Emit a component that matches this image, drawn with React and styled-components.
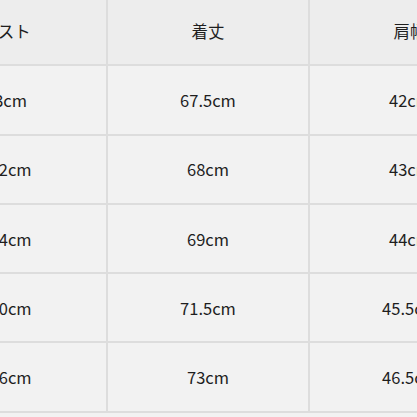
import React from "react";
import styled, { createGlobalStyle } from "styled-components";

const Global = createGlobalStyle`
  html, body { margin: 0; padding: 0; background: #f2f2f2; }
  body { font-family: "Noto Sans CJK JP", "Noto Sans", sans-serif; }
`;

const Viewport = styled.div`
  width: 417px;
  height: 417px;
  overflow: hidden;
  background: #f2f2f2;
`;

const Table = styled.table`
  border-collapse: collapse;
  table-layout: fixed;
  margin-left: -96px;
  margin-top: -5px;
  width: 808px;
  background: #f2f2f2;
`;

const Col = styled.col`
  width: 202px;
`;

const Row = styled.tr`
  height: 69.3px;
  background: ${(p) => (p.$head ? "#ededed" : "#f2f2f2")};
`;

const Cell = styled.td`
  border: 2px solid #dddddd;
  text-align: center;
  vertical-align: middle;
  padding: 0;
  font-size: 16.5px;
  color: #1e1e1e;
  font-weight: 400;
  white-space: nowrap;
`;

const head = ["バスト", "着丈", "肩幅", "袖丈"];
const rows = [
  ["93cm", "67.5cm", "42cm", "60cm"],
  ["102cm", "68cm", "43cm", "61cm"],
  ["104cm", "69cm", "44cm", "62cm"],
  ["110cm", "71.5cm", "45.5cm", "63cm"],
  ["116cm", "73cm", "46.5cm", "64cm"],
];

export default function App() {
  return (
    <>
      <Global />
      <Viewport>
        <Table>
          <colgroup>
            <Col />
            <Col />
            <Col />
            <Col />
          </colgroup>
          <tbody>
            <Row $head>
              {head.map((h) => (
                <Cell key={h}>{h}</Cell>
              ))}
            </Row>
            {rows.map((r, i) => (
              <Row key={i}>
                {r.map((c, j) => (
                  <Cell key={j}>{c}</Cell>
                ))}
              </Row>
            ))}
          </tbody>
        </Table>
      </Viewport>
    </>
  );
}
